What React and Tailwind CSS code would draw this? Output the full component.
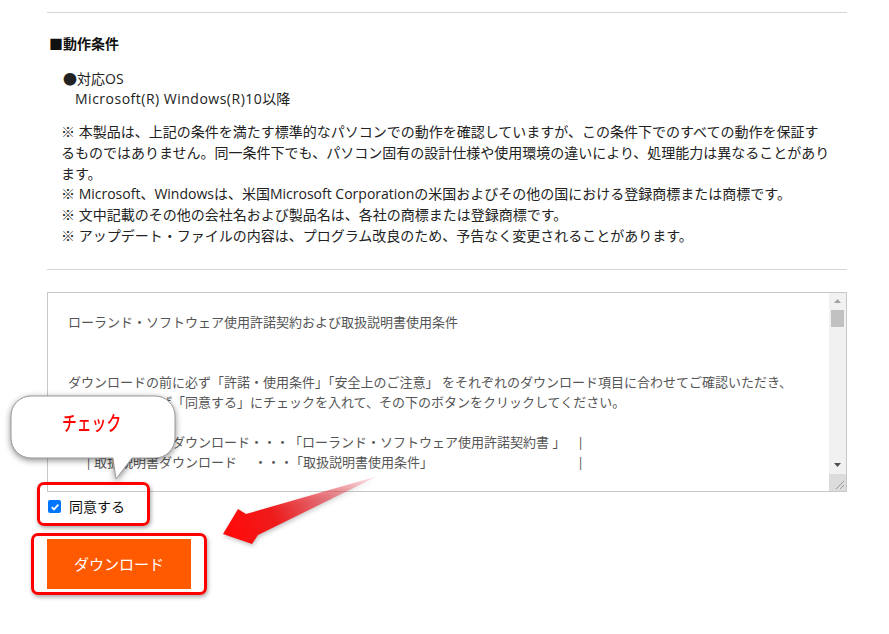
import React from "react";

const font = { fontFamily: '"Open Sans", "Noto Sans CJK JP", "Noto Sans", sans-serif' };

function Bubble() {
  return (
    <div className="absolute left-0 top-[390px] w-[190px] h-[100px]">
      <svg width="190" height="100" viewBox="0 0 190 100" className="absolute left-0 top-0" style={{ filter: "drop-shadow(0px 2px 3px rgba(0,0,0,0.45))" }}>
        <path
          d="M 31 6 H 155 A 20 20 0 0 1 175 26 V 48 A 20 20 0 0 1 155 68 H 132 L 116 89 L 113 68 H 31 A 20 20 0 0 1 11 48 V 26 A 20 20 0 0 1 31 6 Z"
          fill="#ffffff"
          stroke="#9a9a9a"
          strokeWidth="1"
        />
      </svg>
      <div className="absolute left-[62px] top-[21px] h-[26px] flex items-center">
        <span className="inline-block text-[20px] leading-[26px] font-medium text-[#ff0000] origin-left scale-x-[0.74] whitespace-nowrap">チェック</span>
      </div>
    </div>
  );
}

function Arrow() {
  return (
    <svg width="180" height="80" viewBox="0 0 180 80" className="absolute left-[210px] top-[470px]" style={{ filter: "drop-shadow(1px 2px 2px rgba(0,0,0,0.25))" }}>
      <defs>
        <linearGradient id="ag" x1="168" y1="6" x2="20" y2="64" gradientUnits="userSpaceOnUse">
          <stop offset="0" stopColor="#e83040" stopOpacity="0.08" />
          <stop offset="0.35" stopColor="#e8303c" stopOpacity="0.6" />
          <stop offset="0.7" stopColor="#ee1c1c" stopOpacity="1" />
          <stop offset="1" stopColor="#ff0a0a" stopOpacity="1" />
        </linearGradient>
      </defs>
      <polygon points="13,64 28,39 36,44 168,6 48,65 42,74" fill="url(#ag)" />
    </svg>
  );
}

function FakeTextarea() {
  return (
    <div className="w-[800px] h-[200px] border border-[#c8c8c8] flex overflow-hidden bg-white">
      <div className="flex-1 pl-[20px] pt-[19px] text-[13px] leading-[20px] text-[#555555] whitespace-nowrap overflow-hidden">
        <div>ローランド・ソフトウェア使用許諾契約および取扱説明書使用条件</div>
        <div className="h-[20px]" />
        <div className="h-[20px]" />
        <div>ダウンロードの前に必ず「許諾・使用条件」「安全上のご注意」 をそれぞれのダウンロード項目に合わせてご確認いただき、</div>
        <div>同意いただければ「同意する」にチェックを入れて、その下のボタンをクリックしてください。</div>
        <div className="h-[20px]" />
        <div className="whitespace-pre">
          <span className="inline-block w-[26px] pl-[17px]">|</span>
          <span className="inline-block w-[195px]">ソフトウェアダウンロード・・・</span>
          <span className="inline-block w-[288px]">「ローランド・ソフトウェア使用許諾契約書 」</span>
          <span>|</span>
        </div>
        <div className="whitespace-pre">
          <span className="inline-block w-[26px] pl-[17px]">|</span>
          <span className="inline-block w-[160px]">取扱説明書ダウンロード</span>
          <span className="inline-block w-[36px]">・・・</span>
          <span className="inline-block w-[287px]">「取扱説明書使用条件」</span>
          <span>|</span>
        </div>
      </div>
      <div className="w-[17px] h-full bg-[#f1f1f1] flex flex-col">
        <div className="h-[17px] flex items-center justify-center">
          <svg width="9" height="6" viewBox="0 0 9 6"><polygon points="4.5,1 8,5 1,5" fill="#a3a3a3" /></svg>
        </div>
        <div className="mx-[2px] h-[17px] bg-[#c1c1c1]" />
        <div className="flex-1" />
        <div className="h-[17px] flex items-center justify-center">
          <svg width="9" height="6" viewBox="0 0 9 6"><polygon points="1,1 8,1 4.5,5" fill="#505050" /></svg>
        </div>
        <div className="h-[17px] bg-[#dcdcdc] flex items-end justify-end">
          <svg width="17" height="17" viewBox="0 0 17 17">
            <line x1="15" y1="7" x2="7" y2="15" stroke="#9a9a9a" strokeWidth="1" />
            <line x1="15" y1="11" x2="11" y2="15" stroke="#9a9a9a" strokeWidth="1" />
          </svg>
        </div>
      </div>
    </div>
  );
}

export default function App() {
  return (
    <div className="relative w-[889px] h-[634px] bg-white overflow-hidden text-[#222222]" style={font}>
      <div className="ml-[47px] w-[800px] pt-[12px]">
        <div className="h-px bg-[#d6d6d6]" />
        <div className="mt-[21px] ml-[2px] text-[14px] font-bold leading-[20px] text-[#111111]">■動作条件</div>
        <div className="mt-[15px] ml-[16px] text-[14px] leading-[20px]">●対応OS</div>
        <div className="ml-[28px] text-[14px] leading-[20px]"><span className="tracking-[0.5px]">Microsoft(R) Windows(R)10</span>以降</div>
        <div className="mt-[13px] ml-[14px] w-[785px] text-[14px] leading-[20.8px] whitespace-nowrap">
          <div>※ 本製品は、上記の条件を満たす標準的なパソコンでの動作を確認していますが、この条件下でのすべての動作を保証す</div>
          <div>るものではありません。同一条件下でも、パソコン固有の設計仕様や使用環境の違いにより、処理能力は異なることがあり</div>
          <div>ます。</div>
          <div>※ Microsoft、Windowsは、米国Microsoft Corporationの米国およびその他の国における登録商標または商標です。</div>
          <div>※ 文中記載のその他の会社名および製品名は、各社の商標または登録商標です。</div>
          <div>※ アップデート・ファイルの内容は、プログラム改良のため、予告なく変更されることがあります。</div>
        </div>
        <div className="mt-[22px] h-px bg-[#d6d6d6]" />
        <div className="mt-[22px]">
          <FakeTextarea />
        </div>
        <div className="relative mt-[5px] h-[20px] flex items-center">
          <span className="inline-flex items-center justify-center w-[13px] h-[13px] rounded-[2px] bg-[#0075ff] ml-[1px]">
            <svg width="10" height="10" viewBox="0 0 10 10"><path d="M1.8 5.2 L4 7.4 L8.4 2.6" fill="none" stroke="#ffffff" strokeWidth="1.8" /></svg>
          </span>
          <span className="ml-[8px] text-[14px] leading-[20px] text-[#111111]">同意する</span>
          <div className="absolute left-[-10px] top-[-15px] w-[113px] h-[44px] border-[3px] border-[#ff0000] rounded-[7px] shadow-[1px_2px_4px_rgba(0,0,0,0.35)]" />
        </div>
        <div className="relative mt-[22px] w-[144px] h-[50px]">
          <button className="w-[144px] h-[50px] bg-[#ff5a00] text-white text-[15px] leading-[20px] flex items-center justify-center">ダウンロード</button>
          <div className="absolute left-[-16px] top-[-6px] w-[176px] h-[62px] border-[3px] border-[#ff0000] rounded-[7px] shadow-[1px_2px_4px_rgba(0,0,0,0.35)]" />
        </div>
      </div>
      <Bubble />
      <Arrow />
    </div>
  );
}
